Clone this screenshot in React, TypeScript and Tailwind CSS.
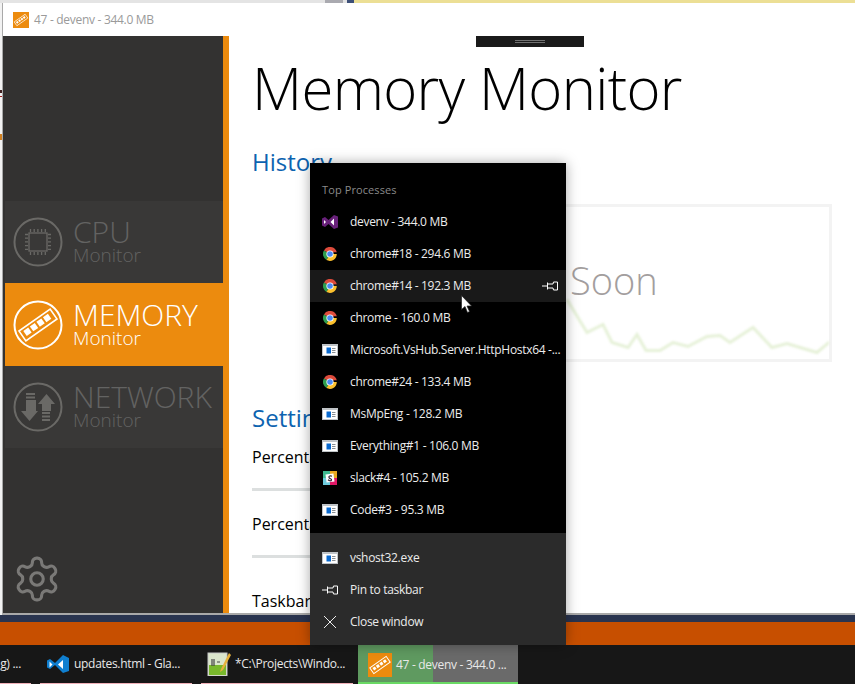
import type { ReactNode } from "react";

const font = "font-['Open_Sans','Noto_Sans',sans-serif]";

function RamIcon({ className = "" }: { className?: string }) {
  return (
    <svg viewBox="0 0 24 24" className={className} fill="none">
      <g transform="rotate(-35 12 12)" stroke="white" strokeWidth="1">
        <rect x="2" y="8.5" width="20" height="7" fill="none" />
        <rect x="4" y="10.2" width="3" height="3" fill="white" stroke="none" />
        <rect x="8.2" y="10.2" width="3" height="3" fill="white" stroke="none" />
        <rect x="12.4" y="10.2" width="3" height="3" fill="white" stroke="none" />
        <rect x="16.6" y="10.2" width="3" height="3" fill="white" stroke="none" />
      </g>
    </svg>
  );
}

function CircleIcon({ children, color }: { children: ReactNode; color: string }) {
  return (
    <svg viewBox="0 0 50 50" className="w-[50px] h-[50px] shrink-0" fill="none">
      <circle cx="25" cy="25" r="23.5" stroke={color} strokeWidth="2" />
      {children}
    </svg>
  );
}

function CpuGlyph() {
  const c = "#6a6966";
  const ticks = [0, 1, 2, 3, 4];
  return (
    <g stroke={c} strokeWidth="1.3">
      <rect x="16" y="16" width="18" height="18" />
      {ticks.map((t) => (
        <g key={t}>
          <path d={`M${17.5 + t * 3.7} 12v3M${17.5 + t * 3.7} 35v3M12 ${17.5 + t * 3.7}h3M35 ${17.5 + t * 3.7}h3`} />
        </g>
      ))}
    </g>
  );
}

function MemGlyph() {
  return (
    <g transform="rotate(-35 25 25)">
      <rect x="6" y="19" width="38" height="12" stroke="white" strokeWidth="1.6" />
      {[9.5, 17.5, 25.5, 33.5].map((x) => (
        <rect key={x} x={x} y="21.5" width="6" height="6" fill="white" />
      ))}
    </g>
  );
}

function NetGlyph() {
  const c = "#6a6966";
  return (
    <g fill={c}>
      <path d="M13 11h9v2h-9zM13 14.500h9v2h-9zM13 18h10v11h-10z" />
      <path d="M8 29h17l-8.500 10z" />
      <path d="M25 22l8.500-10 8.500 10h-4v7h-9v-7z" />
      <path d="M29 30h8v2h-8zM29 33.500h8v2h-8zM29 37h8v2h-8z" />
    </g>
  );
}

function NavItem({ title, icon, active }: { title: string; icon: ReactNode; active?: boolean }) {
  return (
    <div className={`ml-[2px] flex items-center pl-[8px] ${active ? "h-[83px] bg-[#ec8b0e] text-white" : "h-[82px] bg-[#393837] text-[#636362]"}`}>
      {icon}
      <div className="ml-[10px] flex flex-col pb-px">
        <span className="text-[30px] leading-[28px] font-light">{title}</span>
        <span className="text-[19px] leading-[19px] font-light">Monitor</span>
      </div>
    </div>
  );
}

function VsIcon() {
  return (
    <svg viewBox="0 0 16 14" className="w-4 h-[14px]">
      <path d="M0 3.500 3 2 6.500 5 12 0l4 1.500v11L12 14 6.500 9 3 12l-3-1.500z" fill="#68217a" />
      <path d="M2 5v4l2-2zM12 3.500 8.500 7l3.500 3.500z" fill="white" />
    </svg>
  );
}

function ChromeIcon() {
  return (
    <svg viewBox="1 1 14 14" className="w-[14px] h-[14px]">
      <path d="M8 8 1.900 4.500A7 7 0 0 1 14.800 6.300H8z" fill="#dd4b3c" />
      <path d="M8 8 4.500 14.100A7 7 0 0 1 1.900 4.500z" fill="#2f9e4f" />
      <path d="M8 8h6.800A7 7 0 0 1 4.500 14.100z" fill="#fbc02d" />
      <circle cx="8" cy="8" r="3.600" fill="white" />
      <circle cx="8" cy="8" r="2.800" fill="#4a89f3" />
    </svg>
  );
}

function AppIcon() {
  return (
    <svg viewBox="0 0 16 12" className="w-4 h-3">
      <rect width="16" height="12" fill="#bfc3c7" />
      <rect x="1" y="2" width="14" height="9" fill="white" />
      <rect x="4.500" y="3.500" width="4.500" height="6" fill="#0a6ad0" />
      <path d="M10 4.500h3.500M10 6.500h3.500M10 8.500h3.500" stroke="#8a8f94" strokeWidth="1" />
    </svg>
  );
}

function SlackIcon() {
  return (
    <svg viewBox="0 0 14 14" className="w-[14px] h-[14px]">
      <rect width="14" height="14" fill="#3eb890" />
      <rect y="0" x="7" width="7" height="7" fill="#e9a820" />
      <rect y="7" x="7" width="7" height="7" fill="#e01765" />
      <rect y="7" x="0" width="7" height="7" fill="#6ecadc" />
      <rect x="3" y="3" width="8" height="8" fill="white" transform="rotate(-8 7 7)" />
      <path d="M9 5.200C7.500 4.500 5.500 5 6 6.500S9 7.500 8.500 9 6 9.500 5 8.800" stroke="#3a2a3a" strokeWidth="1.200" fill="none" />
    </svg>
  );
}

function PinIcon() {
  return (
    <svg viewBox="0 0 16 10" className="w-4 h-[10px]" fill="none" stroke="white" strokeWidth="1">
      <path d="M0 5h5.500M5.500 1.500v7M5.500 3h5.500M5.500 7h5.500M11 3l.5-2h4v8h-4l-.5-2" />
    </svg>
  );
}

function Row({ icon, label, highlighted }: { icon: ReactNode; label: string; highlighted?: boolean }) {
  return (
    <div className={`flex h-[32px] items-center pl-[12px] pr-[8px] text-[12px] tracking-[-0.3px] text-[#ececec] ${highlighted ? "bg-[#191919]" : ""}`}>
      <span className="flex w-[16px] justify-center shrink-0">{icon}</span>
      <span className="ml-[12px] flex-1 whitespace-nowrap">{label}</span>
      {highlighted && <span className="flex"><PinIcon /></span>}
    </div>
  );
}

// drawn in page coordinates of the history box
function Sparkline() {
  return (
    <svg viewBox="513 208 316 151" className="absolute inset-0 h-full w-full blur-[1px]" fill="none">
      <path
        d="M567 300 587 333 603 325 612 343 628 348 637 335 646 351 660 351 673 343 688 347 707 337 720 336 730 343 753 328 772 348 787 344 800 348 817 353 830 342"
        stroke="#e6f1d8"
        strokeWidth="3"
      />
    </svg>
  );
}

const processes: { icon: ReactNode; label: string; highlighted?: boolean }[] = [
  { icon: <VsIcon />, label: "devenv - 344.0 MB" },
  { icon: <ChromeIcon />, label: "chrome#18 - 294.6 MB" },
  { icon: <ChromeIcon />, label: "chrome#14 - 192.3 MB", highlighted: true },
  { icon: <ChromeIcon />, label: "chrome - 160.0 MB" },
  { icon: <AppIcon />, label: "Microsoft.VsHub.Server.HttpHostx64 -..." },
  { icon: <ChromeIcon />, label: "chrome#24 - 133.4 MB" },
  { icon: <AppIcon />, label: "MsMpEng - 128.2 MB" },
  { icon: <AppIcon />, label: "Everything#1 - 106.0 MB" },
  { icon: <SlackIcon />, label: "slack#4 - 105.2 MB" },
  { icon: <AppIcon />, label: "Code#3 - 95.3 MB" },
];

export default function App() {
  return (
    <div className={`relative flex h-[684px] w-[855px] flex-col overflow-hidden bg-[#c74f00] ${font}`}>
      {/* sliver of the window behind */}
      <div className="flex h-[3px] shrink-0 overflow-hidden">
        <div className="w-[325px] bg-[#e4e4e4]" />
        <div className="w-[18px] bg-[#aaaab0]" />
        <div className="w-[4px] bg-[#e4e4e4]" />
        <div className="w-[7px] bg-[#3d5078]" />
        <div className="flex-1 bg-[#ecdf95] pl-[8px]">
          <div className="mt-[-11px] text-[12px] leading-[12px] text-black">Error List</div>
        </div>
      </div>

      <div className="flex h-[612px] shrink-0">
        {/* what is left of the window behind, at the screen's edge */}
        <div className="flex w-[2px] shrink-0 flex-col bg-[#f2f2f2]">
          <div className="mt-[87px] h-[3px] bg-[#402020]" />
          <div className="mt-[3px] h-px bg-[#a02020]" />
          <div className="mt-[37px] h-[6px] bg-[#d08020]" />
        </div>

        {/* app window */}
        <div className="flex min-w-0 flex-1 flex-col border-b-2 border-l border-[#a9a9a9] bg-white">
          <div className="flex h-[33px] shrink-0 items-center pl-[10px] text-[12px] tracking-[-0.3px] text-[#9a9a9a]">
            <span className="flex h-4 w-4 items-center justify-center bg-[#ec8b0e]">
              <RamIcon className="h-4 w-4" />
            </span>
            <span className="ml-[5px]">47 - devenv - 344.0 MB</span>
          </div>
          <div className="flex min-h-0 flex-1">
            <aside className="flex w-[226px] shrink-0 flex-col border-r-[6px] border-[#ec8b0e] bg-[#333231]">
              <div className="h-[165px] shrink-0" />
              <NavItem title="CPU" icon={<CircleIcon color="#6a6966"><CpuGlyph /></CircleIcon>} />
              <NavItem title="MEMORY" active icon={<CircleIcon color="white"><MemGlyph /></CircleIcon>} />
              <NavItem title="NETWORK" icon={<CircleIcon color="#6a6966"><NetGlyph /></CircleIcon>} />
              <div className="mt-auto pb-[9px] pl-[9px]">
                <svg viewBox="0 0 24 24" className="h-[50px] w-[50px]" fill="none" stroke="#7a7977" strokeWidth="1.500">
                  <circle cx="12" cy="12" r="3" />
                  <path d="M12.220 2h-.440a2 2 0 0 0-2 2v.180a2 2 0 0 1-1 1.730l-.430.250a2 2 0 0 1-2 0l-.150-.080a2 2 0 0 0-2.730.730l-.220.380a2 2 0 0 0 .730 2.730l.150.100a2 2 0 0 1 1 1.720v.510a2 2 0 0 1-1 1.740l-.150.090a2 2 0 0 0-.730 2.730l.220.380a2 2 0 0 0 2.730.730l.150-.080a2 2 0 0 1 2 0l.430.250a2 2 0 0 1 1 1.730V20a2 2 0 0 0 2 2h.440a2 2 0 0 0 2-2v-.180a2 2 0 0 1 1-1.730l.430-.250a2 2 0 0 1 2 0l.150.080a2 2 0 0 0 2.730-.730l.220-.390a2 2 0 0 0-.730-2.730l-.150-.080a2 2 0 0 1-1-1.740v-.500a2 2 0 0 1 1-1.740l.150-.090a2 2 0 0 0 .730-2.730l-.220-.380a2 2 0 0 0-2.730-.730l-.150.080a2 2 0 0 1-2 0l-.430-.250a2 2 0 0 1-1-1.730V4a2 2 0 0 0-2-2z" />
                </svg>
              </div>
            </aside>
            <main className="min-w-0 flex-1 overflow-hidden pl-[23px]">
              <h1 className="mt-[12px] whitespace-nowrap text-[58px] leading-[80px] font-light tracking-[-0.65px] text-black">Memory Monitor</h1>
              <h2 className="mt-[18px] text-[24px] leading-[32px] font-normal text-[#0d63b0]">History</h2>
              <div className="relative mt-[26px] ml-[258px] h-[158px] w-[322px] border-[3px] border-[#f3f3f3]">
                <span className="absolute left-[57px] top-[49px] text-[38px] leading-[48px] font-light text-[#a39e9e]">Soon</span>
                <Sparkline />
              </div>
              <h2 className="mt-[40px] text-[24px] leading-[32px] text-[#0d63b0]">Settings</h2>
              <p className="mt-[11px] text-[16px] leading-[24px] text-black">Percentage</p>
              <div className="mt-[19px] h-[3px] w-[300px] bg-[#dcdfdf]" />
              <p className="mt-[21px] text-[16px] leading-[24px] text-black">Percentage</p>
              <div className="mt-[19px] h-[3px] w-[300px] bg-[#dcdfdf]" />
              <p className="mt-[31px] text-[16px] leading-[24px] text-black">Taskbar</p>
            </main>
          </div>
        </div>
      </div>

      <div className="h-[7px] shrink-0 bg-[#29344f]" />
      <div className="h-[23px] shrink-0 bg-[#c74f00]" />

      {/* taskbar */}
      <div className="flex h-[39px] shrink-0 bg-[#171717] text-[12px] tracking-[-0.3px] text-[#e8e8e8]">
        <div className="flex h-full w-[31px] items-center justify-end overflow-hidden whitespace-nowrap border-b border-[#f0b0b8] pr-[10px]">g) ...</div>
        <div className="ml-[9px] flex h-full w-[152px] items-center border-b border-[#f0b0b8] pl-[6px]">
          <svg viewBox="0 0 24 24" className="h-6 w-6 shrink-0">
            <path d="M1 8.500 4 7l5 4 8-8 6 3v13l-6 2-8-8-5 4-3-1.500z" fill="#0f7fd0" />
            <path d="M3.500 9.500v6l3-3zM17 8l-5 4.500 5 4.500z" fill="white" />
          </svg>
          <span className="ml-[4px] whitespace-nowrap">updates.html - Gla...</span>
        </div>
        <div className="ml-[9px] flex h-full w-[152px] items-center border-b border-[#f0b0b8] pl-[6px]">
          <svg viewBox="0 0 24 24" className="h-6 w-6 shrink-0">
            <rect x="1" y="1" width="19" height="23" fill="#dbe6cc" stroke="#c8c8c8" />
            <rect x="2" y="13" width="17" height="10" fill="#79b82c" />
            <path d="M5 7v7M7 7v7M10 10h3" stroke="#444" strokeWidth="1.200" />
            <path d="M22 1 14 17l-1 3 3-2L24 3z" fill="#e7b23c" />
          </svg>
          <span className="ml-[4px] whitespace-nowrap">*C:\Projects\Windo...</span>
        </div>
        <div className="relative ml-[5px] flex h-full w-[160px] items-center bg-[#6a6a6a]">
          <div className="absolute inset-y-0 left-0 w-[75px] bg-[#5f9a60]" />
          <span className="relative ml-[10px] flex h-6 w-6 items-center justify-center bg-[#ec8b0e]">
            <RamIcon className="h-6 w-6" />
          </span>
          <span className="relative ml-[4px] whitespace-nowrap">47 - devenv - 344.0 ...</span>
          <div className="absolute inset-x-0 bottom-0 h-[2px] bg-[#69d964]" />
        </div>
      </div>

      {/* thumbnail grip at the top of the window */}
      <div className="absolute left-[476px] top-[36px] flex h-[11px] w-[108px] flex-col items-center justify-center gap-px bg-[#1a1a1a]">
        <div className="h-px w-[30px] bg-[#6f6f6f]" />
        <div className="h-px w-[30px] bg-[#6f6f6f]" />
      </div>

      {/* jump list */}
      <div className="absolute left-[310px] top-[163px] h-[482px] w-[256px] bg-black shadow-[0_0_12px_rgba(0,0,0,0.35)]">
        <div className="flex h-[370px] flex-col bg-black">
          <div className="flex h-[43px] shrink-0 items-center pl-[12px] pt-[11px] text-[11px] tracking-[0.1px] text-[#8a8a8a]">Top Processes</div>
          {processes.map((p) => (
            <Row key={p.label} {...p} />
          ))}
        </div>
        <div className="flex h-[112px] flex-col justify-center bg-[#2b2b2b] pt-[2px]">
          <Row icon={<AppIcon />} label="vshost32.exe" />
          <Row icon={<PinIcon />} label="Pin to taskbar" />
          <Row
            icon={
              <svg viewBox="0 0 14 14" className="h-[14px] w-[14px]" fill="none" stroke="#ececec" strokeWidth="1">
                <path d="M1 1l12 12M13 1 1 13" />
              </svg>
            }
            label="Close window"
          />
        </div>
      </div>

      {/* mouse pointer */}
      <svg viewBox="0 0 12 18" className="absolute left-[461px] top-[295px] h-[18px] w-[12px]">
        <path d="M.500.500v14l3.500-3 2.500 6 2-1-2.500-5.500h4.500z" fill="white" stroke="#222" strokeWidth="0.700" />
      </svg>
    </div>
  );
}
